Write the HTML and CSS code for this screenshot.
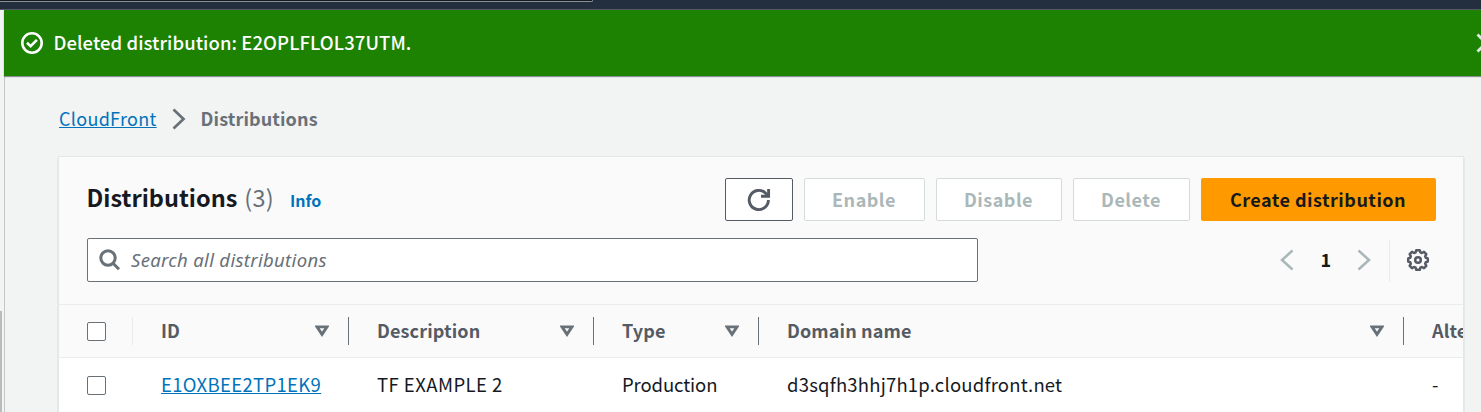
FILE: index.html
```html
<!DOCTYPE html>
<html lang="en">
<head>
<meta charset="utf-8">
<title>CloudFront Distributions</title>
<link rel="stylesheet" href="styles.css">
</head>
<body>
<header class="topbar"><div class="topbar-search"></div></header>
<div class="shell">
  <aside class="rail"><div class="thumb"></div></aside>
  <main class="main">
    <div class="flash">
      <svg class="flash-icon" width="22" height="22" viewBox="0 0 22 22" fill="none" stroke="#fff" stroke-width="2.6"><circle cx="11" cy="11" r="9.7"/><path d="M6 10.8l3.600 3.400 6.300-6.300"/></svg>
      <span class="flash-text">Deleted distribution: E2OPLFLOL37UTM.</span>
      <svg class="flash-close" width="20" height="20" viewBox="0 0 20 20" fill="none" stroke="#e3e8e3" stroke-width="2.8"><path d="M1.5 1.5l17 17M1.5 18.5l17-17"/></svg>
    </div>
    <nav class="crumbs">
      <a class="crumb-link" href="#">CloudFront</a>
      <svg class="crumb-sep" width="14" height="22" viewBox="0 0 14 22" fill="none" stroke="#687078" stroke-width="2.7"><path d="M1.5 1.5l10 9.5-10 9.5"/></svg>
      <span class="crumb-current">Distributions</span>
    </nav>
    <section class="card">
      <div class="card-head">
        <div class="title-row">
          <h1 class="title">Distributions</h1>
          <span class="count">(3)</span>
          <a class="info" href="#">Info</a>
          <div class="actions">
            <button class="btn btn-refresh" aria-label="Refresh"><svg width="24" height="24" viewBox="0 0 24 24" fill="none" stroke="#545b64" stroke-width="2.9"><path d="M21.400 12a9.600 9.600 0 1 1-2.800-6.800l2 2.500"/><path d="M21.600 1v7.200h-7.600"/></svg></button>
            <button class="btn btn-enable" disabled>Enable</button>
            <button class="btn btn-disable" disabled>Disable</button>
            <button class="btn btn-delete" disabled>Delete</button>
            <button class="btn btn-primary">Create distribution</button>
          </div>
        </div>
        <div class="tools-row">
          <div class="search">
            <svg width="22" height="22" viewBox="0 0 22 22" fill="none" stroke="#687078" stroke-width="3"><circle cx="9" cy="9" r="7.200"/><path d="M14 14.200l6 6"/></svg>
            <span class="placeholder">Search all distributions</span>
          </div>
          <div class="pager">
            <svg width="14" height="22" viewBox="0 0 14 22" fill="none" stroke="#aab7b8" stroke-width="2.5"><path d="M12.5 1.5L2 11l10.500 9.500"/></svg>
            <span class="page">1</span>
            <svg width="14" height="22" viewBox="0 0 14 22" fill="none" stroke="#aab7b8" stroke-width="2.5"><path d="M1.500 1.500L12 11 1.500 20.500"/></svg>
          </div>
          <div class="prefs">
            <svg width="24" height="24" viewBox="0 0 24 24" fill="none" stroke="#545b64" stroke-width="2.500" stroke-linejoin="round"><path d="M10.300 2.200h3.400l.7 2.200 1.500.6 2.100-1.100 2.300 2.300-1.100 2.100.6 1.500 2 .7v3l-2 .7-.6 1.500 1.100 2.100-2.300 2.300-2.100-1.100-1.500.6-.7 2.200h-3.400l-.7-2.200-1.500-.6L6 20.100l-2.300-2.300 1.100-2.100-.6-1.500-2-.7v-3l2-.7.6-1.500-1.100-2.100L6 3.900 8.100 5l1.500-.6z"/><circle cx="12" cy="12" r="2.800"/></svg>
          </div>
        </div>
      </div>
      <div class="grid grid-head">
        <div class="cell check light"><span class="box"></span></div>
        <div class="cell"><span class="label">ID</span><svg class="sort" width="14" height="12" viewBox="0 0 14 12"><path d="M2 1.900h10L7 9.400z" fill="none" stroke="#687078" stroke-width="2.900"/></svg></div>
        <div class="cell"><span class="label">Description</span><svg class="sort" width="14" height="12" viewBox="0 0 14 12"><path d="M2 1.900h10L7 9.400z" fill="none" stroke="#687078" stroke-width="2.900"/></svg></div>
        <div class="cell"><span class="label">Type</span><svg class="sort" width="14" height="12" viewBox="0 0 14 12"><path d="M2 1.900h10L7 9.400z" fill="none" stroke="#687078" stroke-width="2.900"/></svg></div>
        <div class="cell"><span class="label">Domain name</span><svg class="sort" width="14" height="12" viewBox="0 0 14 12"><path d="M2 1.900h10L7 9.400z" fill="none" stroke="#687078" stroke-width="2.900"/></svg></div>
        <div class="cell last"><span class="label">Alte</span></div>
      </div>
      <div class="grid grid-row">
        <div class="cell check"><span class="box"></span></div>
        <div class="cell"><a class="label id" href="#">E1OXBEE2TP1EK9</a></div>
        <div class="cell desc"><span class="label">TF EXAMPLE 2</span></div>
        <div class="cell type"><span class="label">Production</span></div>
        <div class="cell"><span class="label">d3sqfh3hhj7h1p.cloudfront.net</span></div>
        <div class="cell last"><span class="label">-</span></div>
      </div>
    </section>
  </main>
</div>
</body>
</html>
```
FILE: styles.css
```css
* { box-sizing: border-box; }
body {
  margin: 0;
  width: 1481px;
  height: 412px;
  overflow: hidden;
  display: flex;
  flex-direction: column;
  background: #f2f3f3;
  color: #16191f;
  font: 18.5px/24px "Noto Sans CJK JP", "Noto Sans", sans-serif;
}
svg { display: block; flex: none; }
a { color: #0073bb; }

.topbar { flex: none; height: 10px; background: #232f3e; border-bottom: 1px solid #545b64; }
.topbar-search { width: 593px; height: 2px; background: #16191f; border: solid #879196; border-width: 0 1px 1px 0; border-radius: 0 0 2px 0; }

.shell { flex: 1; display: flex; min-height: 0; }
.rail { width: 4px; flex: none; background: #f2f3f3; padding-top: 301px; }
.thumb { width: 2px; height: 101px; background: #bbb; }
.main { flex: 1; min-width: 0; display: flex; flex-direction: column; border-left: 1px solid #c3c7c9; background: #f2f3f3; }

.flash {
  flex: none;
  display: flex;
  align-items: center;
  height: 66px;
  margin-left: -1px;
  padding-left: 17px;
  background: #1d8102;
  color: #fff;
  box-shadow: 0 1px 1px #879196;
}
.flash-text { margin-left: 10.5px; padding-bottom: 2px; font-weight: 500; letter-spacing: .06px; }
.flash-close { margin-left: auto; margin-right: -15px; }

.crumbs { flex: none; display: flex; align-items: center; height: 80px; padding: 5px 0 0 54px; }
.crumb-link { padding-bottom: 2px; font-size: 18px; letter-spacing: .3px; text-underline-offset: 1px; text-decoration-thickness: 1px; }
.crumb-sep { margin: 0 15px; }
.crumb-current { padding-bottom: 2px; color: #687078; font-size: 18px; font-weight: 700; letter-spacing: .12px; }

.card {
  flex: 1;
  width: 1404px;
  margin: 1px 0 0 54px;
  overflow: hidden;
  background: #fff;
  box-shadow: 0 0 0 1px #e3e7e7, 1px 1px 1px #aab7b8, -1px 1px 1px #aab7b8;
}
.card-head { height: 147px; padding: 21px 27px 0 28px; background: #fafafa; }
.title-row { display: flex; align-items: center; height: 43px; }
.title { margin: 0 0 0 -.5px; padding-bottom: 5px; font-size: 23.5px; line-height: 32px; font-weight: 700; }
.count { margin-left: 7px; padding-bottom: 5px; color: #687078; font-size: 23.5px; letter-spacing: .2px; }
.info { margin: 1px 0 0 16px; font-size: 16px; font-weight: 700; text-decoration: none; }
.actions { display: flex; gap: 11px; margin-left: auto; }
.btn {
  height: 43px;
  padding: 0 1px 2px 0;
  display: flex;
  align-items: center;
  justify-content: center;
  border: 1px solid #d5dbdb;
  border-radius: 2px;
  background: #fff;
  color: #aab7b8;
  font: 700 18px/24px "Noto Sans CJK JP", "Noto Sans", sans-serif;
  letter-spacing: .48px;
}
.btn-refresh { width: 68px; padding: 0; border-color: #545b64; }
.btn-enable { width: 121px; }
.btn-disable { width: 126px; }
.btn-delete { width: 117px; }
.btn-primary { width: 235px; background: #f90; border-color: #f90; color: #16191f; }

.tools-row { display: flex; align-items: center; margin-top: 17px; height: 44px; }
.search { display: flex; align-items: center; gap: 10px; width: 891px; height: 44px; padding-left: 11px; border: 1px solid #687078; border-radius: 2px; background: #fff; }
.placeholder { color: #687078; font: italic 18.5px/24px "Noto Sans", sans-serif; letter-spacing: .32px; }
.pager { display: flex; align-items: center; gap: 26px; margin-left: auto; padding-right: 18px; }
.page { padding-bottom: 2px; font-size: 18px; font-weight: 700; }
.prefs { display: flex; align-items: center; height: 43px; padding: 0 6px 0 16px; border-left: 1px solid #eaeded; }

.grid { display: grid; grid-template-columns: 74px 216px 245px 165px 645px 200px; }
.cell { display: flex; align-items: center; padding-left: 28px; border-right: 1px solid transparent; white-space: nowrap; }
.label { padding-bottom: 2px; }
.grid-head { height: 54px; padding: 12px 0; background: #fafafa; border: solid #eaeded; border-width: 1px 0; color: #545b64; font-size: 18px; font-weight: 700; letter-spacing: .12px; }
.grid-head .cell { height: 28px; border-right-color: #687078; justify-content: space-between; }
.grid-head .light { border-right-color: #eaeded; }
.grid-head .last { border-right-color: transparent; justify-content: flex-start; }
.sort { margin-right: 19.5px; }
.grid-row { height: 54px; letter-spacing: .2px; }
.box { width: 19px; height: 19px; border: 1px solid #687078; border-radius: 2px; background: #fff; }
.id { letter-spacing: .33px; text-underline-offset: 1px; text-decoration-thickness: 1px; }
.desc { letter-spacing: .45px; }
.type { letter-spacing: -.1px; }
```
